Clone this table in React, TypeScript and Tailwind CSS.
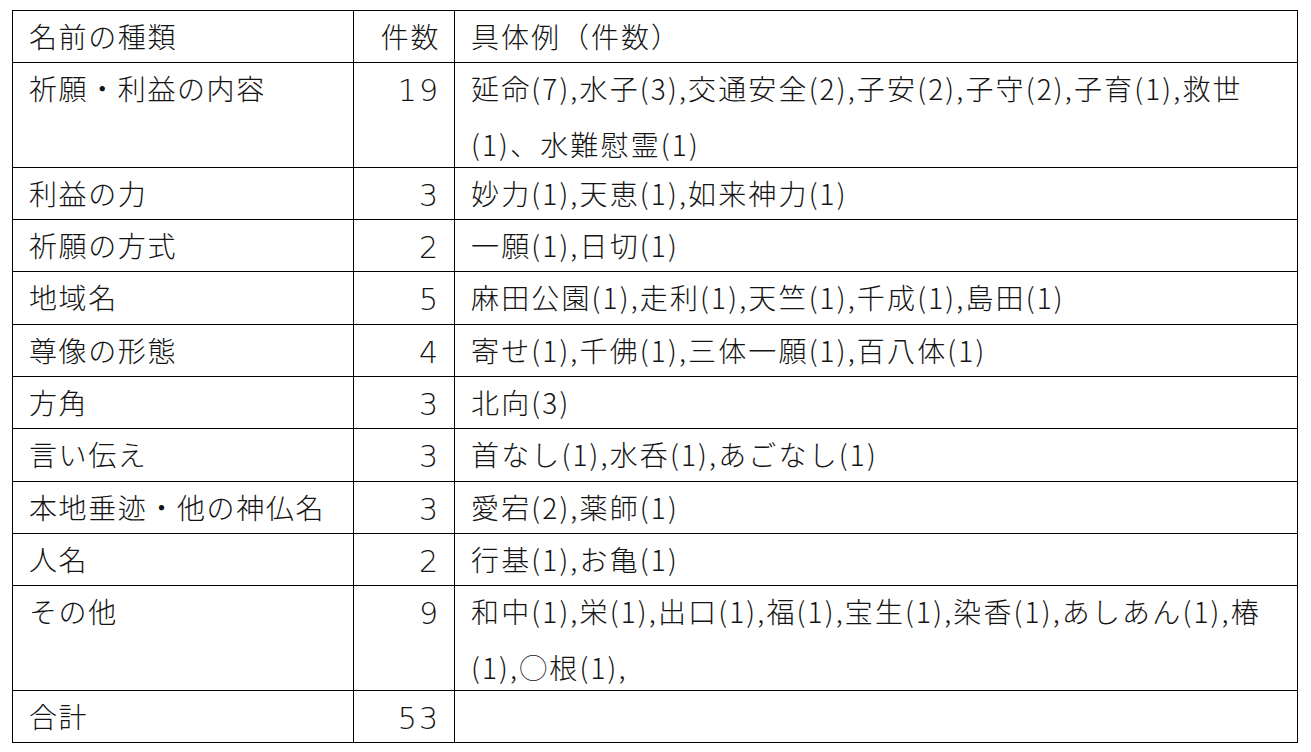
import React from "react";

const rows: { name: string; count: string; ex: React.ReactNode; tall?: boolean }[] = [
  {
    name: "祈願・利益の内容",
    count: "19",
    ex: (
      <>
        延命(7),水子(3),交通安全(2),子安(2),子守(2),子育(1),救世
        <br />
        (1)、水難慰霊(1)
      </>
    ),
    tall: true,
  },
  { name: "利益の力", count: "3", ex: "妙力(1),天恵(1),如来神力(1)" },
  { name: "祈願の方式", count: "2", ex: "一願(1),日切(1)" },
  { name: "地域名", count: "5", ex: "麻田公園(1),走利(1),天竺(1),千成(1),島田(1)" },
  { name: "尊像の形態", count: "4", ex: "寄せ(1),千佛(1),三体一願(1),百八体(1)" },
  { name: "方角", count: "3", ex: "北向(3)" },
  { name: "言い伝え", count: "3", ex: "首なし(1),水呑(1),あごなし(1)" },
  { name: "本地垂迹・他の神仏名", count: "3", ex: "愛宕(2),薬師(1)" },
  { name: "人名", count: "2", ex: "行基(1),お亀(1)" },
  {
    name: "その他",
    count: "9",
    ex: (
      <>
        和中(1),栄(1),出口(1),福(1),宝生(1),染香(1),あしあん(1),椿
        <br />
        (1),◯根(1),
      </>
    ),
    tall: true,
  },
  { name: "合計", count: "53", ex: "" },
];

const cell = "border border-black align-top whitespace-nowrap p-0";

export default function App() {
  return (
    <div
      className="w-[1311px] h-[752px] bg-white pt-[10px] pl-[12px] text-[#141414]"
      style={{ fontFamily: '"Noto Sans CJK JP", "Noto Sans", sans-serif' }}
    >
      <table className="border-collapse table-fixed w-[1285px] text-[28px] font-light leading-[51.3px] tracking-[1.6px]">
        <colgroup>
          <col className="w-[341px]" />
          <col className="w-[101px]" />
          <col className="w-[843px]" />
        </colgroup>
        <tbody>
          <tr>
            <td className={`${cell} pl-[16px]`}>名前の種類</td>
            <td className={`${cell} pr-[14px] text-right`}>件数</td>
            <td className={`${cell} pl-[16px] tracking-[2px]`}>具体例（件数）</td>
          </tr>
          {rows.map((r) => (
            <tr key={r.name}>
              <td className={`${cell} pl-[16px]`}>{r.name}</td>
              <td className={`${cell} pr-[14px] text-right font-['DejaVu_Sans',sans-serif] font-extralight text-[30px] tracking-[2px]`}>
                <div className="h-[51.3px] leading-[51.3px] relative top-[2px]">{r.count}</div>
              </td>
              <td className={`${cell} pl-[16px] tracking-[2.15px]`}>
                {r.tall ? (
                  <div className="h-[103.6px] leading-[56px] relative -top-[3px]">{r.ex}</div>
                ) : (
                  r.ex
                )}
              </td>
            </tr>
          ))}
        </tbody>
      </table>
    </div>
  );
}
